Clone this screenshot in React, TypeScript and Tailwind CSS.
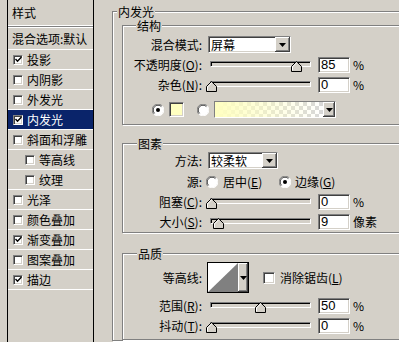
import React from "react";

const font = "font-['Noto_Sans_CJK_SC','Liberation_Sans',sans-serif]";
const sunken =
  "border border-t-[#808080] border-l-[#808080] border-b-white border-r-white shadow-[inset_1px_1px_0_#404040,inset_-1px_-1px_0_#d4d0c8]";
const raised =
  "bg-[#d4d0c8] shadow-[inset_-1px_-1px_0_#404040,inset_1px_1px_0_#ffffff,inset_-2px_-2px_0_#808080]";
const etched = "border border-[#808080] shadow-[inset_1px_1px_0_#ffffff,1px_1px_0_#ffffff]";

type Item = { label: string; checked: boolean; indent?: boolean; active?: boolean };

const items: Item[] = [
  { label: "投影", checked: true },
  { label: "内阴影", checked: false },
  { label: "外发光", checked: false },
  { label: "内发光", checked: true, active: true },
  { label: "斜面和浮雕", checked: false },
  { label: "等高线", checked: false, indent: true },
  { label: "纹理", checked: false, indent: true },
  { label: "光泽", checked: false },
  { label: "颜色叠加", checked: false },
  { label: "渐变叠加", checked: true },
  { label: "图案叠加", checked: false },
  { label: "描边", checked: true },
];

const Check = ({ on, big }: { on: boolean; big?: boolean }) => (
  <div
    className={`${big ? "w-[12px] h-[12px]" : "w-[10px] h-[10px]"} shrink-0 bg-white flex items-center justify-center ${sunken}`}
  >
    {on && (
      <svg width="7" height="7" viewBox="0 0 7 7">
        <path d="M0.5 3 L2.5 5.2 L6.5 1" fill="none" stroke="#000" strokeWidth="1.4" />
      </svg>
    )}
  </div>
);

const Radio = ({ on }: { on: boolean }) => (
  <svg width="12" height="12" viewBox="0 0 12 12" className="shrink-0">
    <circle cx="6" cy="6" r="5.5" fill="#fff" />
    <path d="M1.8 10.2 A5.5 5.5 0 0 1 10.2 1.8" fill="none" stroke="#808080" />
    <path d="M2.6 9.4 A4.5 4.5 0 0 1 9.4 2.6" fill="none" stroke="#404040" />
    <path d="M10.2 1.8 A5.5 5.5 0 0 1 1.8 10.2" fill="none" stroke="#fff" />
    {on && <circle cx="6" cy="6" r="2" fill="#000" />}
  </svg>
);

const Arrow = () => (
  <svg width="7" height="4" viewBox="0 0 7 4">
    <path d="M0 0 H7 L3.5 4 Z" fill="#000" />
  </svg>
);

const Dropdown = ({ text, className }: { text: string; className: string }) => (
  <div className={`${className} h-[17px] bg-white flex ${sunken}`}>
    <div className="flex-1 pl-[2px] text-[12px] leading-[15px]">{text}</div>
    <div className={`w-[15px] h-full flex items-center justify-center ${raised}`}>
      <Arrow />
    </div>
  </div>
);

const Slider = ({ pos }: { pos: number }) => (
  <div className="relative w-[101px] h-[16px] shrink-0">
    <div className="absolute left-0 right-0 top-[4px] h-[6px] border border-t-[#808080] border-l-[#808080] border-b-white border-r-white bg-[#d4d0c8] shadow-[inset_1px_1px_0_#000]" />
    <svg className="absolute top-[4px]" style={{ left: pos - 5 }} width="11" height="11" viewBox="0 0 11 11">
      <path d="M5.5 0.5 L10.5 5.5 V10.5 H0.5 V5.5 Z" fill="#d4d0c8" stroke="#000" />
      <path d="M1.5 9.5 V5.9 L5.5 1.9" fill="none" stroke="#fff" />
    </svg>
  </div>
);

const NumBox = ({ v }: { v: string }) => (
  <div
    className={`ml-[7px] w-[32px] h-[16px] shrink-0 bg-white pl-[2px] text-[13px] leading-[14px] font-['Liberation_Sans',sans-serif] ${sunken}`}
  >
    {v}
  </div>
);

const Label = ({ children }: { children: React.ReactNode }) => (
  <div className="w-[79px] shrink-0 text-right text-[12px] leading-[14px] whitespace-nowrap">{children}</div>
);

const SliderRow = ({
  label,
  pos,
  v,
  unit,
  className,
}: {
  label: React.ReactNode;
  pos: number;
  v: string;
  unit: string;
  className: string;
}) => (
  <div className={`${className} h-[16px] flex items-center`}>
    <Label>{label}</Label>
    <div className="ml-[8px]">
      <Slider pos={pos} />
    </div>
    <NumBox v={v} />
    <div className="ml-[3px] text-[12px] leading-[14px]">{unit}</div>
  </div>
);

const Group = ({
  title,
  legendClass,
  className,
  children,
}: {
  title: string;
  legendClass: string;
  className: string;
  children: React.ReactNode;
}) => (
  <fieldset className={`${className} ${etched}`}>
    <legend className={`${legendClass} px-[1px] text-[12px] leading-[13px] bg-[#d4d0c8]`}>{title}</legend>
    {children}
  </fieldset>
);

export default function App() {
  return (
    <div className={`w-[399px] h-[342px] overflow-hidden bg-[#d4d0c8] text-black flex ${font}`}>
      {/* style list */}
      <div className="w-[94px] h-full shrink-0 pl-[7px]">
        <div className="w-[87px] h-full border-x border-black flex flex-col text-[12px]">
          <div className="h-[26px] pl-[4px] flex items-center border-b border-white">样式</div>
          <div className="h-[2px] border-t border-[#808080] border-b border-b-white" />
          <div className="h-[22px] pl-[4px] flex items-center border-b border-white whitespace-nowrap">
            混合选项:默认
          </div>
          {items.map((it) => (
            <div
              key={it.label}
              className={`h-[20px] flex items-center border-b border-white whitespace-nowrap ${
                it.indent ? "pl-[17px]" : "pl-[5px]"
              } ${it.active ? "bg-[#0a246a] text-white" : ""}`}
            >
              <Check on={it.checked} />
              <span className="ml-[4px] leading-[14px]">{it.label}</span>
            </div>
          ))}
        </div>
      </div>

      {/* settings */}
      <div className="ml-[18px] shrink-0">
        <Group title="内发光" legendClass="ml-[4px]" className="w-[320px] mt-[5px]">
          <div className="pl-[9px]">
            <Group title="结构" legendClass="ml-[13px]" className="w-[300px] mt-[1px] pb-[6px]">
              <div className="mt-[4px] h-[17px] flex items-center">
                <Label>混合模式:</Label>
                <Dropdown text="屏幕" className="ml-[6px] w-[83px]" />
              </div>
              <SliderRow
                className="mt-[4px]"
                label={<>不透明度(<u>O</u>):</>}
                pos={86}
                v="85"
                unit="%"
              />
              <SliderRow className="mt-[4px]" label={<>杂色(<u>N</u>):</>} pos={1} v="0" unit="%" />
              <div className="mt-[8px] h-[17px] flex items-center">
                <div className="ml-[29px]">
                  <Radio on={true} />
                </div>
                <div className={`ml-[5px] w-[15px] h-[15px] bg-[#ffffc0] ${sunken}`} />
                <div className="ml-[13px]">
                  <Radio on={false} />
                </div>
                <div className={`ml-[5px] w-[122px] h-[17px] flex bg-white ${sunken}`}>
                  <svg className="flex-1 h-full" preserveAspectRatio="none">
                    <defs>
                      <pattern id="chk" width="8" height="8" patternUnits="userSpaceOnUse">
                        <rect width="8" height="8" fill="#ffffff" />
                        <rect width="4" height="4" fill="#d8d8d8" />
                        <rect x="4" y="4" width="4" height="4" fill="#d8d8d8" />
                      </pattern>
                      <linearGradient id="grad" x1="0" x2="1" y1="0" y2="0">
                        <stop offset="0" stopColor="#ffffc0" />
                        <stop offset="1" stopColor="#ffffc0" stopOpacity="0" />
                      </linearGradient>
                    </defs>
                    <rect width="100%" height="100%" fill="url(#chk)" />
                    <rect width="100%" height="100%" fill="url(#grad)" />
                  </svg>
                  <div className={`w-[12px] h-full flex items-center justify-center ${raised}`}>
                    <Arrow />
                  </div>
                </div>
              </div>
            </Group>

            <Group title="图素" legendClass="ml-[14px]" className="w-[300px] mt-[12px] pb-[2px]">
              <div className="mt-[2px] h-[17px] flex items-center">
                <Label>方法:</Label>
                <Dropdown text="较柔软" className="ml-[6px] w-[70px]" />
              </div>
              <div className="mt-[6px] h-[14px] flex items-center text-[12px] leading-[14px]">
                <Label>源:</Label>
                <div className="ml-[4px]">
                  <Radio on={false} />
                </div>
                <span className="ml-[5px] w-[56px] whitespace-nowrap">
                  居中(<u>E</u>)
                </span>
                <Radio on={true} />
                <span className="ml-[4px] whitespace-nowrap">
                  边缘(<u>G</u>)
                </span>
              </div>
              <SliderRow className="mt-[5px]" label={<>阻塞(<u>C</u>):</>} pos={1} v="0" unit="%" />
              <SliderRow className="mt-[4px]" label={<>大小(<u>S</u>):</>} pos={8} v="9" unit="像素" />
            </Group>

            <Group title="品质" legendClass="ml-[14px]" className="w-[300px] mt-[14px] pb-[5px]">
              <div className="mt-[2px] h-[31px] flex items-center">
                <Label>等高线:</Label>
                <div className="ml-[5px] w-[42px] h-[31px] flex border border-black">
                  <svg width="30" height="29" viewBox="0 0 30 29">
                    <rect width="30" height="29" fill="#ffffff" />
                    <polygon points="0,29 30,0 30,29" fill="#808080" />
                  </svg>
                  <div className={`flex-1 h-full flex items-center justify-center ${raised}`}>
                    <Arrow />
                  </div>
                </div>
                <div className="ml-[14px]">
                  <Check on={false} big />
                </div>
                <span className="ml-[5px] text-[12px] leading-[14px] whitespace-nowrap">
                  消除锯齿(<u>L</u>)
                </span>
              </div>
              <SliderRow className="mt-[5px]" label={<>范围(<u>R</u>):</>} pos={50} v="50" unit="%" />
              <SliderRow className="mt-[4px]" label={<>抖动(<u>T</u>):</>} pos={1} v="0" unit="%" />
            </Group>
          </div>
        </Group>
      </div>
    </div>
  );
}
